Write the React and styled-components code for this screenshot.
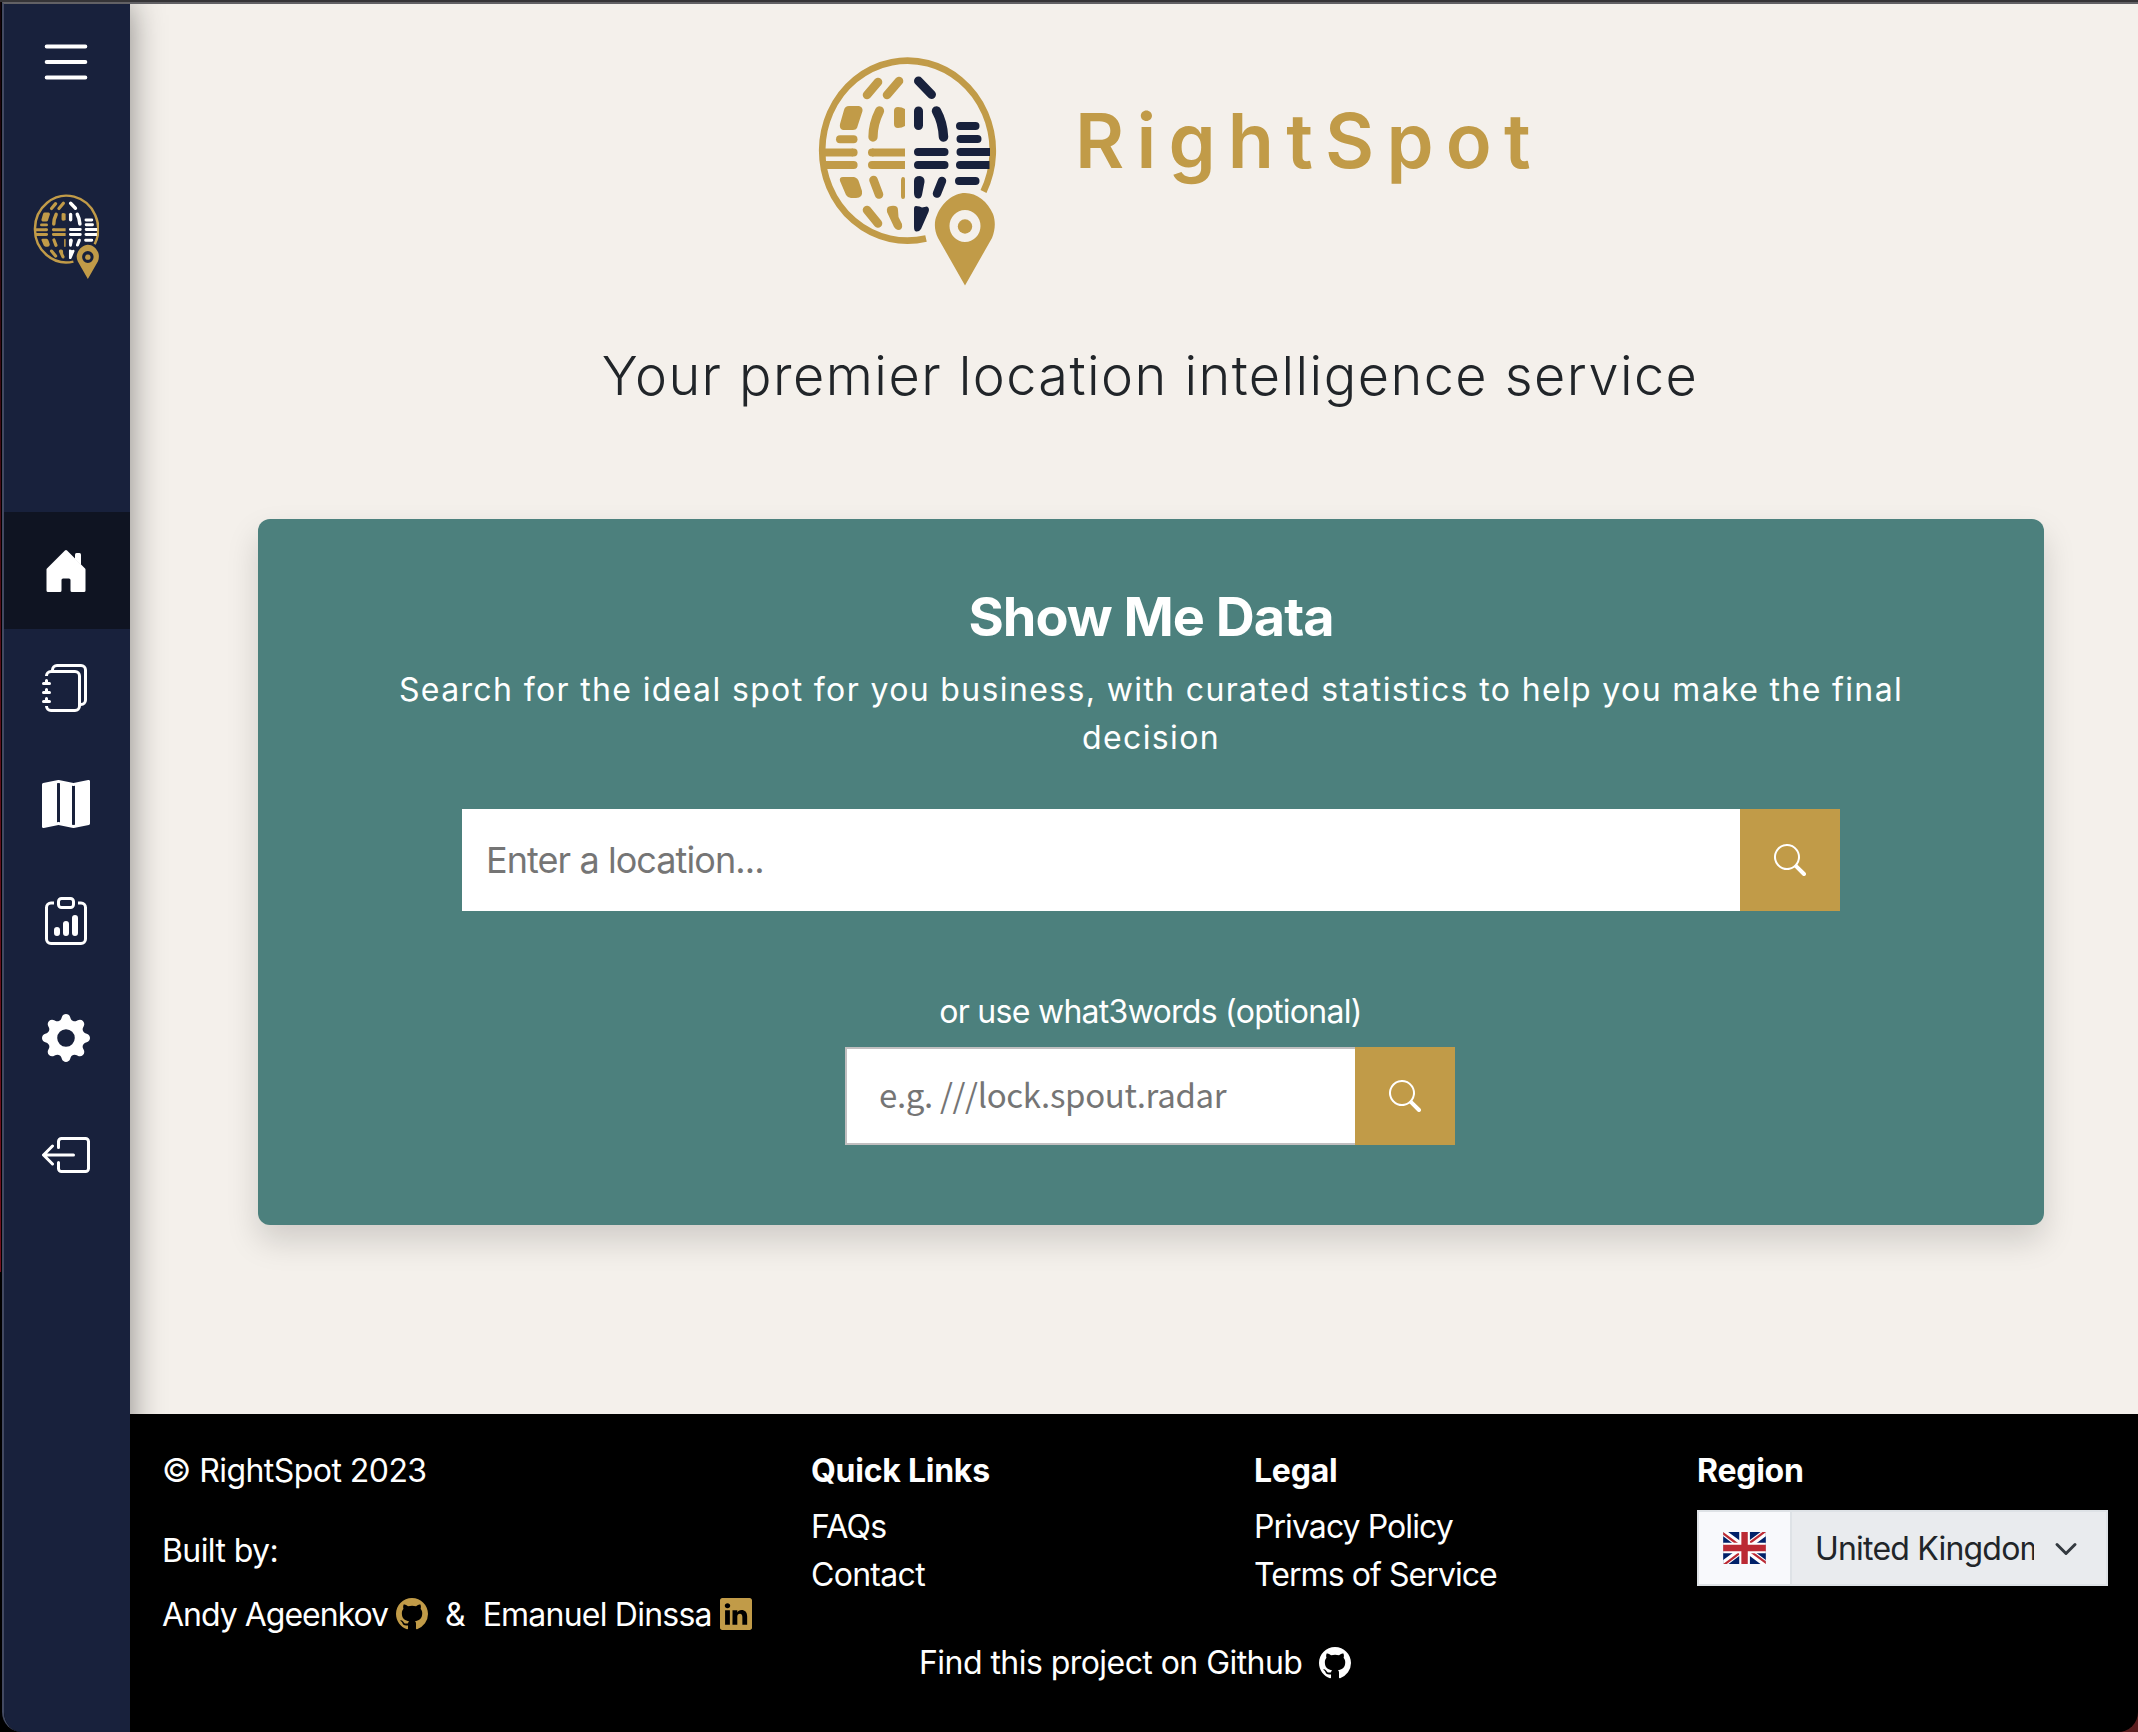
import React from "react";
import styled, { createGlobalStyle } from "styled-components";
import { BsList, BsJournals, BsMapFill, BsClipboardData, BsGearFill, BsBoxArrowLeft, BsSearch, BsGithub, BsLinkedin } from "react-icons/bs";

const gold = "#c19b48";
const navy = "#18213c";

const Global = createGlobalStyle`
  *, *::before, *::after { box-sizing: border-box; }
  body { margin: 0; background: #f4f0eb; font-family: Inter, "Liberation Sans", sans-serif; color: #212529; }
  h1, h2, h3, p, ul { margin: 0; padding: 0; }
  a { color: inherit; text-decoration: none; }
`;

const Window = styled.div`
  display: flex;
  width: 2138px;
  height: 1732px;
  overflow: hidden;
  padding-left: 2px;
  border-top: 2px solid #353437;
  background:
    linear-gradient(#14030a, #5c0f1c 700px, #74101f) 0 0 / 1px 1270px no-repeat,
    linear-gradient(90deg, #000 50%, #591d1f 50%);
`;

const Frame = styled.div`
  display: flex;
  flex: 1;
  min-width: 0;
  border-left: 2px solid #424961;
  border-top: 2px solid #626165;
  border-radius: 0 0 20px 20px;
  overflow: hidden;
`;

const Sidebar = styled.nav`
  flex: 0 0 126px;
  display: flex;
  flex-direction: column;
  align-items: center;
  background: ${navy};
  color: #fff;
  box-shadow: 0 0 32px rgba(0, 0, 0, 0.45);
  z-index: 1;
`;

const MenuToggle = styled.button`
  display: flex;
  margin: 27px 2px 0 0;
  padding: 0;
  border: 0;
  background: none;
  color: #fff;
  svg { width: 62px; height: 62px; }
`;

const SmallBrand = styled.div`
  display: flex;
  margin: 101px 2px 0 0;
  height: 100px;
`;

const NavList = styled.div`
  display: flex;
  flex-direction: column;
  align-self: stretch;
  margin-top: 218px;
`;

const NavItem = styled.a`
  display: flex;
  align-items: center;
  justify-content: center;
  height: 116.8px;
  padding: 1px 2px 0 0;
  background: ${(p) => (p.$active ? "#0f1422" : "transparent")};
  svg { width: 48px; height: 48px; }
`;

const Page = styled.div`
  flex: 1;
  min-width: 0;
  display: flex;
  flex-direction: column;
`;

const Main = styled.main`
  height: 1410px;
  background: #f4f0eb;
  padding: 0 94px 0 128px;
  display: flex;
  flex-direction: column;
`;

const Hero = styled.header`
  display: flex;
  height: 300px;
  padding: 52px 0 0 559px;
`;

const Title = styled.h1`
  margin-left: 78px;
  padding-top: 39px;
  font-size: 75.5px;
  line-height: 91px;
  font-weight: 600;
  letter-spacing: 12.2px;
  color: ${gold};
`;

const Tagline = styled.h2`
  margin: 36px 2px 0 0;
  text-align: center;
  font-size: 54px;
  line-height: 72px;
  font-weight: 300;
  letter-spacing: 1.45px;
`;

const Card = styled.section`
  margin-top: 107px;
  height: 706px;
  padding: 62px 128px 0;
  border-radius: 12px;
  background: #4c807d;
  color: #fff;
  box-shadow: 0 16px 32px rgba(0, 0, 0, 0.15);
  display: flex;
  flex-direction: column;
  align-items: center;
  text-align: center;
`;

const CardTitle = styled.h3`
  font-size: 54px;
  line-height: 72px;
  font-weight: 700;
  letter-spacing: -1px;
`;

const Lead = styled.p`
  margin-top: 13px;
  font-size: 32px;
  line-height: 48px;
  font-weight: 400;
  letter-spacing: 1.36px;
`;

const SearchGroup = styled.form`
  display: flex;
  width: ${(p) => p.$width}px;
  height: ${(p) => p.$height}px;
  margin-top: ${(p) => p.$top}px;
  margin-right: ${(p) => p.$shift || 0}px;
`;

const Field = styled.input`
  flex: 1;
  min-width: 0;
  border: 0 solid #c1bfc0;
  border-width: ${(p) => (p.$outlined ? "2px 0 2px 2px" : "0")};
  border-radius: 0;
  padding: ${(p) => (p.$outlined ? "0 32px 5px" : "0 24px")};
  background: #fff;
  font-family: ${(p) => (p.$outlined ? '"Noto Sans CJK SC", "Noto Sans", sans-serif' : "inherit")};
  font-size: ${(p) => (p.$outlined ? 33 : 36)}px;
  letter-spacing: ${(p) => p.$spacing || 0}px;
  &::placeholder { color: #757575; opacity: 1; }
`;

const SearchButton = styled.button`
  width: 100px;
  display: flex;
  align-items: center;
  justify-content: center;
  padding: 0;
  border: 0;
  background: ${gold};
  color: #fff;
  svg { width: 32px; height: 32px; }
`;

const Label = styled.label`
  margin-top: 77px;
  margin-right: 1px;
  font-size: 32px;
  line-height: 48px;
  letter-spacing: -0.72px;
`;

const Footer = styled.footer`
  flex: 1;
  background: #000;
  color: #fff;
  font-size: 32px;
  line-height: 48px;
  letter-spacing: -0.6px;
  padding: 33px 30px 0 32px;
`;

const Columns = styled.div`
  display: grid;
  grid-template-columns: 649px 443px 443px 411px;
  height: 192px;
`;

const Credits = styled.div`
  white-space: nowrap;
`;

const CreditLine = styled.p`
  margin-top: ${(p) => p.$top || 0}px;
  letter-spacing: ${(p) => p.$tracking || -0.6}px;
`;

const Ampersand = styled.span`
  margin: 0 18px 0 17px;
`;

const Coauthor = styled.span`
  letter-spacing: -0.78px;
`;

const InlineIcon = styled.span`
  display: inline-flex;
  vertical-align: -4px;
  margin-left: ${(p) => p.$gap || 8}px;
  color: ${(p) => p.$color || gold};
  svg { width: 32px; height: 32px; }
`;

const Heading = styled.h3`
  font-size: 32px;
  line-height: 48px;
  font-weight: 700;
  letter-spacing: -0.25px;
  margin-bottom: 8px;
`;

const LinkList = styled.div`
  display: flex;
  flex-direction: column;
  letter-spacing: ${(p) => p.$tracking}px;
`;

const RegionPicker = styled.div`
  display: flex;
  margin-top: -1px;
  height: 76px;
  border: 2px solid #dee2e6;
`;

const RegionColumn = styled.div`
  ${Heading} { margin-bottom: 16px; }
`;

const FlagBox = styled.div`
  width: 93px;
  display: flex;
  align-items: center;
  justify-content: center;
  background: #f8f9fc;
  border-right: 2px solid #dee2e6;
`;

const Select = styled.div`
  flex: 1;
  display: flex;
  align-items: center;
  padding: 1px 0 0 23px;
  background: #e9ebee;
  color: #212529;
  svg { margin-left: 16px; }
`;

const SelectValue = styled.span`
  width: 219px;
  overflow: hidden;
  white-space: nowrap;
  letter-spacing: -0.8px;
`;

const ProjectLink = styled.p`
  display: flex;
  align-items: center;
  padding-left: 757px;
  letter-spacing: -0.55px;
`;

function Logo({ accent, height }) {
  return (
    <svg width={(height * 180) / 232} height={height} viewBox="17 16 180 232" fill="none">
      <path d="M126 198.500A85.300 90 0 1 1 183.500 151.500" stroke={gold} strokeWidth="6.600" />
      <g stroke={gold} strokeWidth="8" strokeLinecap="round">
        <path d="M67 55 78 42M87 55 99 41" strokeWidth="8.600" />
        <path d="M79.500 71C75 80 73 88 73 97" strokeWidth="9.300" />
        <path d="M40 99.300H53.500" />
        <path d="M22 112.500H53M25 125H53M72 112.500H105M72 125H105" strokeLinecap="butt" />
        <path d="M53.500 112.500H53.600M53.500 125H53.600M72 112.500H72.100M72 125H72.100" />
        <path d="M73.500 140 79 154.500M67 170 78 183.500" strokeWidth="8.600" />
      </g>
      <g fill={gold}>
        <path d="M49 66H59Q63 67 62.500 71L57 88Q56 90 53 90H43Q39 89 40 84L44 70Q45 66 49 66ZM98 67Q102 67 105 69V86Q102 88 98 88Q94 88 94 84V71Q94 67 98 67ZM43 137H54Q58 138 59 142L62 151Q63 158 56 158H51Q48 158 46 155L40 141Q39 137 43 137ZM103 137Q105 137 105 139V157Q105 159 103 159Q101 159 101 156V141Q101 137 103 137ZM91 166Q98 165 98 170L98.500 177 102 184Q103 190 98 190Q96 190 94 187L87 172Q86 166 91 166Z" />
      </g>
      <g stroke={accent} strokeWidth="8" strokeLinecap="round">
        <path d="M118.500 41 131.500 54.500" strokeWidth="9" />
        <path d="M118.500 71V85.500" strokeWidth="9" />
        <path d="M136.500 71C141 79 143 87 143.500 97" strokeWidth="9.500" />
        <path d="M160 86H175.500M160.500 99H177.500M118 112H144.500M118 125H144.500M160.500 112H175M160 125H175M159 141H175.500" />
        <path d="M172 112H190M172 125H189.500" strokeLinecap="butt" />
        <path d="M142 141 137 153.500" strokeWidth="8.500" />
      </g>
      <g fill={accent}>
        <path d="M114 141Q114 136 120 136Q125 137 124.500 142L122 155Q121 159 118 158.500Q114 158 114 153ZM116 166Q120 166 122 167.500L127 166.500Q130 168 128.500 172L121 189Q119 192 116 191.500Q114 191 114 187V169Q114 166 116 166Z" />
      </g>
      <path fill={gold} fillRule="evenodd" d="M165 245.500 138 198C134 190 134 181 137 175C142 163 153 153 165 153S188 162 193 174C196 182 195 191 192 198ZM165 170A15.500 16 0 1 0 165 202A15.500 16 0 1 0 165 170Z" />
      <circle cx="165" cy="186.500" r="7.200" fill={gold} />
    </svg>
  );
}

const House = () => (
  <svg viewBox="0 0 16 16" fill="currentColor">
    <path d="M6.500 10.995V14.500a.5.5 0 0 1-.5.5H2a.5.5 0 0 1-.5-.5v-7a.5.5 0 0 1 .146-.354l6-6a.5.5 0 0 1 .708 0l6 6a.5.5 0 0 1 .146.354v7a.5.5 0 0 1-.5.5h-4a.5.5 0 0 1-.5-.5V11c0-.25-.25-.5-.5-.5H7c-.25 0-.5.25-.5.495z" />
    <path d="M13 2.500V6l-2-2V2.500a.5.5 0 0 1 .5-.5h1a.5.5 0 0 1 .5.5z" />
  </svg>
);

const Flag = () => (
  <svg width="43" height="32" viewBox="0 0 640 480">
    <path fill="#012169" d="M0 0h640v480H0z" />
    <path fill="#FFF" d="m75 0 244 181L562 0h78v62L400 241l240 178v61h-80L320 301 81 480H0v-60l239-178L0 64V0z" />
    <path fill="#BB2A34" d="m424 281 216 159v40L369 281zm-184 20 6 35L54 480H0zM640 0v3L391 191l2-44L590 0zM0 0l239 176h-60L0 42z" />
    <path fill="#FFF" d="M241 0v480h160V0zM0 160v160h640V160z" />
    <path fill="#BB2A34" d="M0 193v96h640v-96zM273 0v480h96V0z" />
  </svg>
);

const Chevron = () => (
  <svg width="32" height="24" viewBox="0 0 16 16" fill="none" stroke="#343a40" strokeWidth="2" strokeLinecap="round" strokeLinejoin="round">
    <path d="m2 5 6 6 6-6" />
  </svg>
);

const navItems = [
  { id: "home", Icon: House, active: true },
  { id: "journals", Icon: BsJournals },
  { id: "map", Icon: BsMapFill },
  { id: "reports", Icon: BsClipboardData },
  { id: "settings", Icon: BsGearFill },
  { id: "logout", Icon: BsBoxArrowLeft },
];

export default function App() {
  return (
    <>
      <Global />
      <Window>
        <Frame>
          <Sidebar>
            <MenuToggle><BsList /></MenuToggle>
            <SmallBrand><Logo accent="#fff" height={86} /></SmallBrand>
            <NavList>
              {navItems.map(({ id, Icon, active }) => (
                <NavItem key={id} $active={active}><Icon /></NavItem>
              ))}
            </NavList>
          </Sidebar>
          <Page>
            <Main>
              <Hero>
                <Logo accent={navy} height={232} />
                <Title>RightSpot</Title>
              </Hero>
              <Tagline>Your premier location intelligence service</Tagline>
              <Card>
                <CardTitle>Show Me Data</CardTitle>
                <Lead>Search for the ideal spot for you business, with curated statistics to help you make the final decision</Lead>
                <SearchGroup $width={1378} $height={102} $top={47}>
                  <Field placeholder="Enter a location..." $spacing={-0.93} />
                  <SearchButton type="button"><BsSearch /></SearchButton>
                </SearchGroup>
                <Label>or use what3words (optional)</Label>
                <SearchGroup $width={610} $height={98} $top={11} $shift={2}>
                  <Field placeholder="e.g. ///lock.spout.radar" $outlined $spacing={-0.35} />
                  <SearchButton type="button"><BsSearch /></SearchButton>
                </SearchGroup>
              </Card>
            </Main>
            <Footer>
              <Columns>
                <Credits>
                  <CreditLine $tracking={-0.55}>© RightSpot 2023</CreditLine>
                  <CreditLine $top={32}>Built by:</CreditLine>
                  <CreditLine $top={16} $tracking={-1}>
                    Andy Ageenkov<InlineIcon><BsGithub /></InlineIcon>
                    <Ampersand>&amp;</Ampersand>
                    <Coauthor>Emanuel Dinssa</Coauthor><InlineIcon><BsLinkedin /></InlineIcon>
                  </CreditLine>
                </Credits>
                <div>
                  <Heading>Quick Links</Heading>
                  <LinkList $tracking={-0.7}><a>FAQs</a><a>Contact</a></LinkList>
                </div>
                <div>
                  <Heading>Legal</Heading>
                  <LinkList $tracking={-0.93}><a>Privacy Policy</a><a>Terms of Service</a></LinkList>
                </div>
                <RegionColumn>
                  <Heading>Region</Heading>
                  <RegionPicker>
                    <FlagBox><Flag /></FlagBox>
                    <Select><SelectValue>United Kingdom</SelectValue><Chevron /></Select>
                  </RegionPicker>
                </RegionColumn>
              </Columns>
              <ProjectLink>Find this project on Github<InlineIcon $gap={17} $color="#fff"><BsGithub /></InlineIcon></ProjectLink>
            </Footer>
          </Page>
        </Frame>
      </Window>
    </>
  );
}
